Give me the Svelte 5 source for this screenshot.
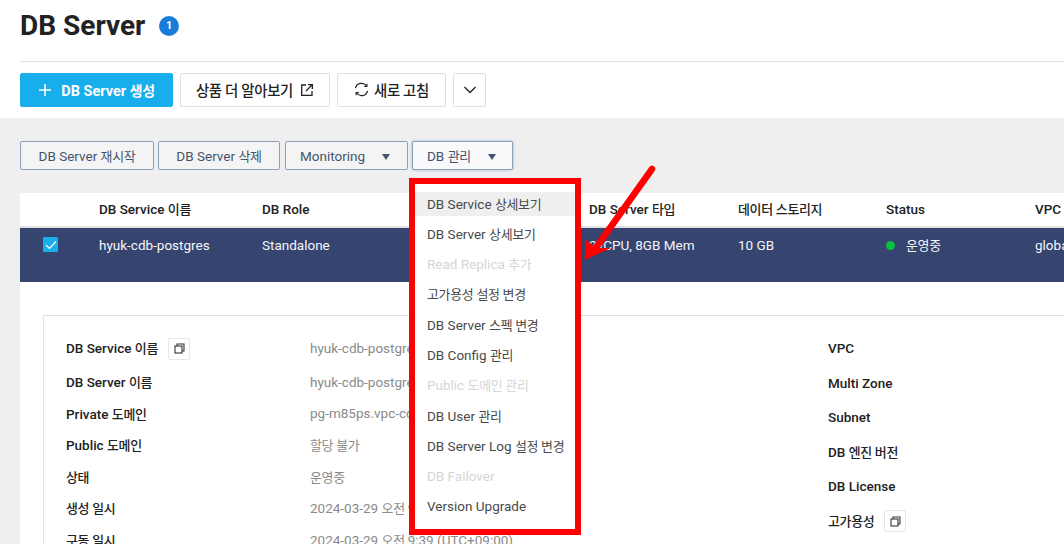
<script>
  const menuItems = [
    { label: 'DB Service 상세보기', active: true },
    { label: 'DB Server 상세보기' },
    { label: 'Read Replica 추가', disabled: true },
    { label: '고가용성 설정 변경' },
    { label: 'DB Server 스펙 변경' },
    { label: 'DB Config 관리' },
    { label: 'Public 도메인 관리', disabled: true },
    { label: 'DB User 관리' },
    { label: 'DB Server Log 설정 변경' },
    { label: 'DB Failover', disabled: true },
    { label: 'Version Upgrade' }
  ];

  const leftRows = [
    { label: 'DB Service 이름', value: 'hyuk-cdb-postgres', copy: true },
    { label: 'DB Server 이름', value: 'hyuk-cdb-postgres' },
    { label: 'Private 도메인', value: 'pg-m85ps.vpc-cdb.ntruss.com' },
    { label: 'Public 도메인', value: '할당 불가' },
    { label: '상태', value: '운영중' },
    { label: '생성 일시', value: '2024-03-29 오전 9:33 (UTC+09:00)' },
    { label: '구동 일시', value: '2024-03-29 오전 9:39 (UTC+09:00)' }
  ];

  const rightRows = [
    { label: 'VPC' },
    { label: 'Multi Zone' },
    { label: 'Subnet' },
    { label: 'DB 엔진 버전' },
    { label: 'DB License' },
    { label: '고가용성', copy: true }
  ];

  // hangul runs get a tighter setting than the latin around them
  const runs = (text) => text.split(/([가-힣][가-힣 ]*)/).filter(Boolean);
  const isKo = (part) => /[가-힣]/.test(part);
</script>

{#snippet t(text)}
  {#each runs(text) as part}<span class:ko={isKo(part)}>{part}</span>{/each}
{/snippet}

{#snippet copyBtn()}
  <span class="copy">
    <svg width="11" height="11" viewBox="0 0 11 11" fill="none" stroke="#333" stroke-width="1.1"><rect x="1" y="3" width="7" height="7" /><path d="M3 3V1h7v7H8" /></svg>
  </span>
{/snippet}

<div class="page">
  <header class="head">
    <div class="title-row">
      <h1>DB Server</h1>
      <span class="badge">1</span>
    </div>
    <div class="actions">
      <button class="btn primary">
        <svg width="14" height="14" viewBox="0 0 14 14"><path d="M7 1v12M1 7h12" stroke="#fff" stroke-width="1.6" fill="none" /></svg>
        <span>{@render t('DB Server 생성')}</span>
      </button>
      <button class="btn learn">
        <span>{@render t('상품 더 알아보기')}</span>
        <svg width="14" height="14" viewBox="0 0 14 14" fill="none" stroke="#222" stroke-width="1.3"><path d="M6 2H1.700v10.300H12V8" /><path d="M8 1.600h4.400V6M12.200 1.800L6 8" /></svg>
      </button>
      <button class="btn refresh">
        <svg width="15" height="15" viewBox="0 0 15 15" fill="none" stroke="#222" stroke-width="1.2"><path d="M1.500 6.200A6 6 0 0 1 12.400 4" /><path d="M13.500 8.800A6 6 0 0 1 2.600 11" /><path d="M12.900 1.800v2.700h-2.700M2.100 13.200v-2.700h2.700" /></svg>
        <span>{@render t('새로 고침')}</span>
      </button>
      <button class="btn more" aria-label="더보기">
        <svg width="14" height="8" viewBox="0 0 14 8" fill="none" stroke="#222" stroke-width="1.3"><path d="M1.500 1l5.500 5.500L12.500 1" /></svg>
      </button>
    </div>
  </header>

  <section class="content">
    <div class="toolbar">
      <button class="tool w1"><span>{@render t('DB Server 재시작')}</span></button>
      <button class="tool w2"><span>{@render t('DB Server 삭제')}</span></button>
      <button class="tool drop w3"><span>Monitoring</span><i class="caret"></i></button>
      <button class="tool drop w4 focused"><span>{@render t('DB 관리')}</span><i class="caret"></i></button>
    </div>

    <div class="panel">
      <div class="table-row thead">
        <span></span>
        <span>{@render t('DB Service 이름')}</span>
        <span>DB Role</span>
        <span>{@render t('DB Server 타입')}</span>
        <span>{@render t('데이터 스토리지')}</span>
        <span>Status</span>
        <span>VPC</span>
      </div>
      <div class="table-row selected">
        <span class="check">
          <svg width="12" height="10" viewBox="0 0 12 10" fill="none" stroke="#fff" stroke-width="1.2"><path d="M1 5l3.500 3.500L11 1.500" /></svg>
        </span>
        <span>hyuk-cdb-postgres</span>
        <span>Standalone</span>
        <span>2vCPU, 8GB Mem</span>
        <span>10 GB</span>
        <span class="status"><i class="dot"></i>{@render t('운영중')}</span>
        <span>global-vpc</span>
      </div>

      <div class="detail">
        <div class="detail-col left">
          {#each leftRows as row}
            <div class="detail-row">
              <span class="label">{@render t(row.label)}</span>
              {#if row.copy}{@render copyBtn()}{/if}
              <span class="value">{@render t(row.value)}</span>
            </div>
          {/each}
        </div>
        <div class="detail-col right">
          {#each rightRows as row}
            <div class="detail-row">
              <span class="label">{@render t(row.label)}</span>
              {#if row.copy}{@render copyBtn()}{/if}
            </div>
          {/each}
        </div>
      </div>
    </div>
  </section>

  <!-- dropdown with the red annotation box round it -->
  <ul class="menu">
    {#each menuItems as item}
      <li class:active={item.active} class:disabled={item.disabled}>{@render t(item.label)}</li>
    {/each}
  </ul>

  <svg class="arrow" width="90" height="110" viewBox="0 0 90 110">
    <path d="M72 6L15 86" stroke="#f00" stroke-width="6.500" stroke-linecap="round" fill="none" />
    <path d="M4.500 97L6 77L16 85L31 85Z" fill="#f00" />
  </svg>
</div>

<style>
  :global(body) {
    margin: 0;
    overflow: hidden;
    background: #fff;
  }

  .page {
    position: relative;
    width: 1064px;
    height: 544px;
    overflow: hidden;
    font-family: Roboto, "Noto Sans CJK KR", sans-serif;
    font-size: 14px;
    color: #222;
  }

  .ko {
    font-size: 0.96em;
    letter-spacing: -0.3px;
  }

  button {
    font-family: inherit;
    margin: 0;
    cursor: pointer;
  }

  .head {
    height: 118px;
    padding-left: 20px;
    box-sizing: border-box;
  }

  .title-row {
    display: flex;
    align-items: center;
    height: 62px;
    padding-bottom: 9px;
    box-sizing: border-box;
    border-bottom: 1px solid #e2e2e2;
  }

  h1 {
    margin: 0;
    font-size: 28px;
    font-weight: 700;
    line-height: 52px;
    color: #222;
  }

  .badge {
    width: 20px;
    height: 20px;
    margin-left: 14px;
    border-radius: 50%;
    background: #1a7cd8;
    color: #fff;
    font-size: 11px;
    font-weight: 700;
    text-align: center;
    line-height: 20px;
  }

  .actions {
    display: flex;
    gap: 7px;
    margin-top: 11px;
  }

  .btn {
    height: 34px;
    display: flex;
    align-items: center;
    justify-content: center;
    gap: 8px;
    padding: 0 0 1px;
    background: #fff;
    border: 1px solid #e0e0e0;
    border-radius: 2px;
    font-size: 15px;
    font-weight: 500;
    color: #222;
    box-sizing: border-box;
  }

  .primary {
    width: 153px;
    background: #17aeeb;
    border-color: #17aeeb;
    color: #fff;
    font-size: 14.500px;
    font-weight: 700;
    gap: 9px;
  }

  .learn { width: 150px; gap: 7px; }
  .refresh { width: 109px; gap: 5px; }
  .more { width: 33px; }

  .content {
    height: 426px;
    background: #efefef;
    padding: 23px 0 0 20px;
    box-sizing: border-box;
  }

  .toolbar {
    display: flex;
    gap: 4px;
    height: 29px;
  }

  .tool {
    display: flex;
    align-items: center;
    justify-content: center;
    height: 29px;
    padding: 0;
    background: #f4f4f4;
    border: 1px solid #8e9fb8;
    border-radius: 2px;
    font-size: 13.500px;
    color: #44546c;
    box-sizing: border-box;
  }

  .drop {
    justify-content: flex-start;
    padding-left: 14px;
    gap: 17px;
  }

  .w1 { width: 134px; }
  .w2 { width: 122px; }
  .w3 { width: 123px; margin-left: 1px; }
  .w4 { width: 101px; }

  .focused {
    box-shadow: 0 0 3px #8fb8e0;
    background: #f7f9fb;
  }

  .caret {
    width: 0;
    height: 0;
    border-left: 4.500px solid transparent;
    border-right: 4.500px solid transparent;
    border-top: 6px solid #44546c;
    margin-top: 2px;
  }

  .panel {
    margin-top: 23px;
    height: 400px;
    background: #fff;
  }

  .table-row {
    display: grid;
    grid-template-columns: 79px 163px 327px 149px 148px 149px 1fr;
    white-space: nowrap;
    overflow: hidden;
  }

  .thead {
    height: 35px;
    padding-bottom: 2px;
    align-items: center;
    border-bottom: 2px solid #e2e2e2;
    box-sizing: border-box;
    font-size: 13.500px;
    font-weight: 500;
    color: #222;
  }

  .selected {
    height: 54px;
    padding-top: 9px;
    box-sizing: border-box;
    background: #364470;
    color: #f4f6fa;
    font-size: 13.500px;
    line-height: 17px;
    align-items: start;
  }

  .check {
    width: 15px;
    height: 15px;
    margin-left: 23px;
    background: #1aaeeb;
    border-radius: 1px;
    display: flex;
    align-items: center;
    justify-content: center;
  }

  .status {
    display: flex;
    align-items: center;
    gap: 11px;
  }

  .dot {
    width: 9px;
    height: 9px;
    border-radius: 50%;
    background: #0ac13f;
  }

  .detail {
    display: flex;
    margin: 33px 0 0 23px;
    height: 260px;
    padding: 13px 0 0 22px;
    box-sizing: border-box;
    border: 1px solid #e2e2e2;
    border-right: none;
    font-size: 13.500px;
  }

  .detail-col {
    display: flex;
    flex-direction: column;
  }

  .left {
    width: 762px;
    flex: none;
  }

  .right { padding-top: 2px; }

  .left .detail-row { height: 31.500px; }
  .left .detail-row:first-child { height: 37px; }
  .right .detail-row { height: 34.400px; }

  .detail-row {
    position: relative;
    display: flex;
    align-items: center;
    white-space: nowrap;
  }

  .label {
    font-weight: 500;
    color: #222;
  }

  .value {
    position: absolute;
    left: 244px;
    color: #8a8a8a;
  }

  .copy {
    width: 22px;
    height: 22px;
    margin: 2px 0 0 10px;
    border: 1px solid #e6e6e6;
    border-radius: 2px;
    background: #fff;
    box-sizing: border-box;
    display: flex;
    align-items: center;
    justify-content: center;
  }

  .menu {
    position: absolute;
    left: 409px;
    top: 178px;
    width: 172px;
    height: 357px;
    margin: 0;
    padding: 7.500px 0 0;
    box-sizing: border-box;
    list-style: none;
    background: #fff;
    border: 6px solid #f00;
    font-size: 13.500px;
    color: #4a4a4a;
  }

  .menu li {
    height: 30.300px;
    line-height: 25px;
    padding-left: 12px;
    white-space: nowrap;
  }

  .menu li.active {
    height: 24.500px;
    margin-bottom: 5.800px;
    background: #efefef;
  }

  .menu li.disabled {
    color: #d6d6d6;
  }

  .arrow {
    position: absolute;
    left: 580px;
    top: 163px;
  }
</style>
